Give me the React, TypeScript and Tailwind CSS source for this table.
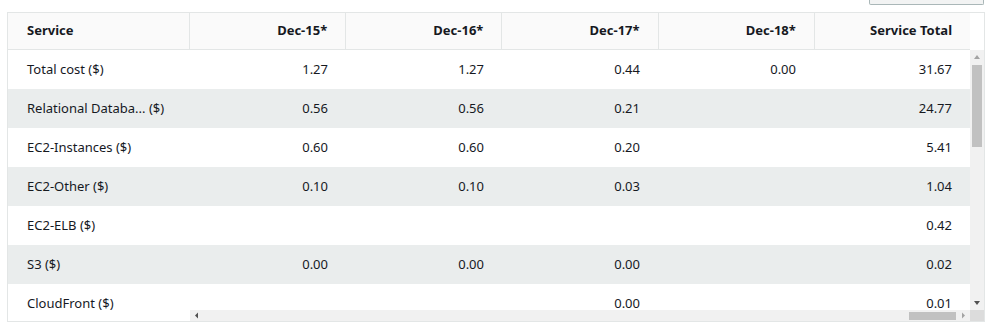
import React from 'react';

interface CostRow {
  service: string;
  values: string[];
  total: string;
}

const columns = ['Dec-15*', 'Dec-16*', 'Dec-17*', 'Dec-18*', 'Service Total'];

const rows: CostRow[] = [
  { service: 'Total cost ($)', values: ['1.27', '1.27', '0.44', '0.00'], total: '31.67' },
  { service: 'Relational Databa... ($)', values: ['0.56', '0.56', '0.21', ''], total: '24.77' },
  { service: 'EC2-Instances ($)', values: ['0.60', '0.60', '0.20', ''], total: '5.41' },
  { service: 'EC2-Other ($)', values: ['0.10', '0.10', '0.03', ''], total: '1.04' },
  { service: 'EC2-ELB ($)', values: ['', '', '', ''], total: '0.42' },
  { service: 'S3 ($)', values: ['0.00', '0.00', '0.00', ''], total: '0.02' },
  { service: 'CloudFront ($)', values: ['', '', '0.00', ''], total: '0.01' },
];

const App: React.FC = () => {
  return (
    <div className="w-[987px] h-[324px] bg-white text-[#16191f] text-[13px] overflow-hidden" style={{ fontFamily: '"Noto Sans", "Open Sans", sans-serif' }}>
      {/* cut-off button above the table */}
      <div className="flex justify-end pr-[3px]">
        <div className="w-[115px] h-[5px] bg-[#f2f3f3] border border-t-0 border-[#aab7b8] rounded-b-[2px]" />
      </div>

      <div className="ml-[7px] mt-[7px] w-[978px] h-[310px] border border-[#e3e6e6] flex overflow-hidden">
        {/* frozen service column */}
        <div className="w-[182px] shrink-0 flex flex-col">
          <div className="h-[37px] shrink-0 bg-[#fafafa] border-b border-r border-[#e3e6e6] flex items-center pl-[19px] font-bold">
            Service
          </div>
          {rows.map((row, i) => (
            <div key={row.service} className={`h-[39px] shrink-0 flex items-center pl-[19px] leading-none ${i % 2 === 1 ? 'bg-[#eaeded]' : 'bg-white'}`}>
              {row.service}
            </div>
          ))}
        </div>

        {/* scrolling part */}
        <div className="flex-1 flex flex-col min-w-0">
          <div className="h-[37px] shrink-0 flex">
            <div className="flex-1 flex bg-[#fafafa] border-b border-[#e3e6e6]">
              {columns.map((c, i) => (
                <div key={c} className={`flex-1 flex items-center justify-end pr-[18px] font-bold ${i < columns.length - 1 ? 'border-r border-[#e3e6e6]' : ''}`}>
                  {c}
                </div>
              ))}
            </div>
            <div className="w-[14px] bg-white" />
          </div>

          <div className="flex-1 flex min-h-0">
            <div className="flex-1 overflow-hidden">
              {rows.map((row, i) => (
                <div key={row.service} className={`h-[39px] flex leading-none ${i % 2 === 1 ? 'bg-[#eaeded]' : 'bg-white'}`}>
                  {[...row.values, row.total].map((v, j) => (
                    <div key={j} className="flex-1 flex items-center justify-end pr-[18px]">
                      {v}
                    </div>
                  ))}
                </div>
              ))}
            </div>
            {/* vertical scrollbar */}
            <div className="w-[14px] shrink-0 bg-[#f1f1f1] flex flex-col items-center">
              <svg width="14" height="14" viewBox="0 0 14 14" className="shrink-0">
                <path d="M4 9 L7 5 L10 9 Z" fill="#a3a3a3" />
              </svg>
              <div className="w-[10px] h-[82px] mt-[1px] bg-[#c1c1c1]" />
              <div className="flex-1" />
              <svg width="14" height="14" viewBox="0 0 14 14" className="shrink-0">
                <path d="M4 5 L7 9 L10 5 Z" fill="#505050" />
              </svg>
            </div>
          </div>

          {/* horizontal scrollbar */}
          <div className="h-[11px] shrink-0 flex bg-[#f1f1f1]">
            <div className="flex-1 flex items-center">
              <svg width="14" height="11" viewBox="0 0 14 11" className="shrink-0">
                <path d="M8 2.5 L5 5.5 L8 8.5 Z" fill="#505050" />
              </svg>
              <div className="flex-1" />
              <div className="w-[47px] h-[8px] bg-[#c1c1c1]" />
              <svg width="14" height="11" viewBox="0 0 14 11" className="shrink-0">
                <path d="M6 2.5 L9 5.5 L6 8.5 Z" fill="#a3a3a3" />
              </svg>
            </div>
            <div className="w-[14px] bg-[#dcdcdc]" />
          </div>
        </div>
      </div>
    </div>
  );
};

export default App;
